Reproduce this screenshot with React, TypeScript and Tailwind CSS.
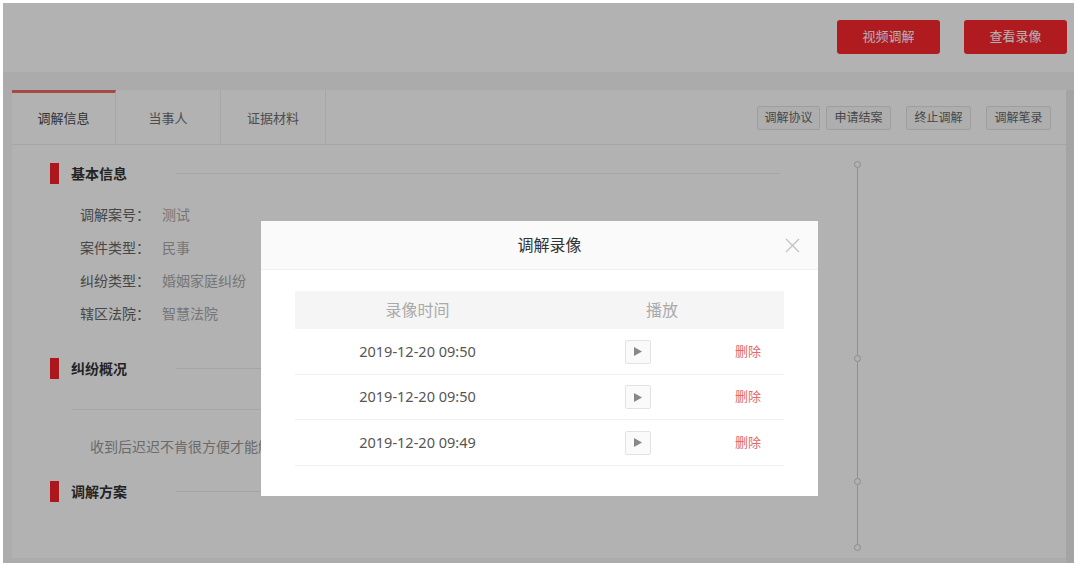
const font = { fontFamily: '"Noto Sans", "Noto Sans CJK SC", sans-serif' }

const tabs = ['调解信息', '当事人', '证据材料']
const actions = ['调解协议', '申请结案', '终止调解', '调解笔录']
const info = [
  ['调解案号：', '测试'],
  ['案件类型：', '民事'],
  ['纠纷类型：', '婚姻家庭纠纷'],
  ['辖区法院：', '智慧法院'],
]
const records = ['2019-12-20 09:50', '2019-12-20 09:50', '2019-12-20 09:49']

function SectionTitle({ title }: { title: string }) {
  return (
    <div className="flex h-[21px] items-center">
      <span className="h-[21px] w-[9px] bg-[#f5222a]" />
      <span className="ml-[12px] text-[14px] font-bold leading-[21px] text-[#333]">{title}</span>
      <span className="ml-[49px] h-px flex-1 bg-[#ececec]" />
    </div>
  )
}

function Dot() {
  return <span className="h-[7px] w-[7px] shrink-0 rounded-full border border-[#c8c8c8]" />
}

export default function App() {
  return (
    <div className="h-[568px] w-[1080px] bg-white pl-[3px] pt-[3px]" style={font}>
      <div className="relative h-[560px] w-[1071px] overflow-hidden bg-white">
        <header className="flex h-[69px] items-start justify-end gap-[24px] pr-[7px] pt-[17px]">
          <button className="h-[34px] w-[103px] rounded-[3px] bg-[#fc272e] text-[13px] text-white">视频调解</button>
          <button className="h-[34px] w-[103px] rounded-[3px] bg-[#fc272e] text-[13px] text-white">查看录像</button>
        </header>
        <div className="h-[18px] bg-[#f5f5f5]" />

        <div className="flex h-[473px] bg-[#f6f6f6] pl-[9px]">
          <div className="h-[468px] w-[1054px] bg-white">
            <div className="flex h-[55px] border-b border-[#eeeeee]">
              {tabs.map((t, i) => (
                <div
                  key={t}
                  className={`flex items-center justify-center border-r border-[#f0f0f0] text-[13px] ${
                    i === 0 ? 'w-[104px] border-t-[3px] border-t-[#f06a60] text-[#4a4a4a]' : 'w-[105px] pt-[3px] text-[#707070]'
                  }`}
                >
                  {t}
                </div>
              ))}
              <div className="ml-auto flex items-center pr-[15px] pt-[2px]">
                {actions.map((a, i) => (
                  <button
                    key={a}
                    className={`h-[24px] rounded-[2px] border border-[#e3e3e3] bg-[#fafafa] text-[12px] text-[#666] ${
                      i === 0 ? 'w-[63px]' : 'w-[65px]'
                    } ${i === 1 ? 'ml-[6px]' : i > 1 ? 'ml-[15px]' : ''}`}
                  >
                    {a}
                  </button>
                ))}
              </div>
            </div>

            <div className="flex">
              <div className="w-[768px] pl-[38px] pt-[18px]">
                <SectionTitle title="基本信息" />
                <div className="mt-[14px]">
                  {info.map(([k, v]) => (
                    <div key={k} className="flex h-[33px] items-center pl-[30px] text-[14px]">
                      <span className="w-[82px] text-[#666]">{k}</span>
                      <span className="text-[#aaa]">{v}</span>
                    </div>
                  ))}
                </div>
                <div className="mt-[28px]">
                  <SectionTitle title="纠纷概况" />
                </div>
                <div className="ml-[22px] mt-[30px] border-t border-[#eeeeee] pl-[18px] pt-[27px] text-[14px] leading-[20px] text-[#999]">
                  收到后迟迟不肯很方便才能解决问题
                </div>
                <div className="mt-[24px]">
                  <SectionTitle title="调解方案" />
                </div>
              </div>

              <div className="ml-[74px] mt-[16px] flex flex-col items-center">
                <Dot />
                <span className="h-[187px] w-px bg-[#cfcfcf]" />
                <Dot />
                <span className="h-[116px] w-px bg-[#cfcfcf]" />
                <Dot />
                <span className="h-[59px] w-px bg-[#cfcfcf]" />
                <Dot />
              </div>
            </div>
          </div>
          <div className="ml-auto h-full w-[8px] bg-[#ebebeb]" />
        </div>

        <div className="absolute inset-0 bg-black/30" />

        <div className="absolute left-[258px] top-[218px] w-[557px] bg-white">
          <div className="relative flex h-[49px] items-center justify-center border-b border-[#efefef] bg-[#fafafa] pl-[20px] text-[16px] text-[#333]">
            调解录像
            <svg className="absolute right-[18px] top-[17px]" width="15" height="15" viewBox="0 0 15 15">
              <path d="M1 1L14 14M14 1L1 14" stroke="#c4c4c4" strokeWidth="1.4" />
            </svg>
          </div>
          <div className="mx-[34px] mt-[21px] pb-[30px]">
            <div className="flex h-[38px] items-center bg-[#f5f5f5] text-[16px] text-[#aaa]">
              <span className="w-[245px] text-center">录像时间</span>
              <span className="flex-1 text-center">播放</span>
            </div>
            {records.map((r, i) => (
              <div
                key={i}
                className={`flex items-center border-b border-[#f0f0f0] ${i === 1 ? 'h-[45px]' : 'h-[46px]'}`}
              >
                <span className="w-[245px] text-center text-[14.5px] text-[#555]">{r}</span>
                <button className="ml-[85px] flex h-[24px] w-[26px] items-center justify-center rounded-[2px] border border-[#e2e2e2] bg-[#fafafa]">
                  <svg width="8" height="9" viewBox="0 0 8 9">
                    <path d="M0 0L8 4.5L0 9Z" fill="#888" />
                  </svg>
                </button>
                <span className="ml-[84px] text-[13px] text-[#e06a6a]">删除</span>
              </div>
            ))}
          </div>
        </div>
      </div>
    </div>
  )
}
